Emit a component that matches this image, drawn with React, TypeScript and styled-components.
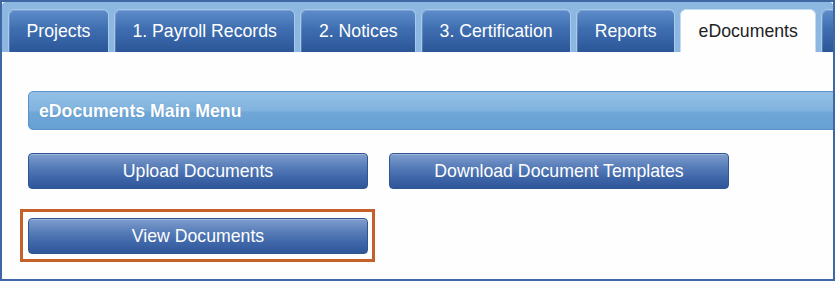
import styled, { createGlobalStyle } from 'styled-components'

const GlobalStyle = createGlobalStyle`
  html, body {
    margin: 0;
    padding: 0;
    background: #fff;
  }
  body {
    font-family: 'Liberation Sans', Arial, sans-serif;
  }
`

const Frame = styled.div`
  width: 835px;
  height: 281px;
  box-sizing: border-box;
  border: 2px solid #3f67a4;
  background: #fefefe;
  overflow: hidden;
  display: flex;
  flex-direction: column;
`

const TabStrip = styled.div`
  display: flex;
  flex-flow: row nowrap;
  align-items: flex-end;
  gap: 5px;
  height: 50px;
  padding: 7px 0 0 6px;
  box-sizing: border-box;
  background: #8bb7e0;
  border-radius: 4px 4px 0 0;
  white-space: nowrap;
`

const Tab = styled.div<{ $active?: boolean }>`
  flex: none;
  height: 43px;
  box-sizing: border-box;
  padding: 0 17.5px;
  display: flex;
  align-items: center;
  justify-content: center;
  font-size: 17.7px;
  border: 1px solid ${(p) => (p.$active ? '#c6dcf1' : '#a9cbeb')};
  border-bottom: none;
  border-radius: 6px 6px 0 0;
  color: ${(p) => (p.$active ? '#222' : '#fff')};
  background: ${(p) =>
    p.$active ? '#fefefe' : 'linear-gradient(to bottom, #5f8dcb 0%, #3f6eb0 45%, #2b5698 100%)'};
  box-shadow: ${(p) => (p.$active ? 'none' : 'inset 1px 1px 0 rgba(255, 255, 255, 0.18)')};
`

const Body = styled.div`
  flex: 1;
  padding: 39px 0 0 26px;
  display: flex;
  flex-direction: column;
`

const MenuHeader = styled.div`
  height: 39px;
  box-sizing: border-box;
  margin-right: -10px;
  padding: 1px 0 0 10px;
  display: flex;
  align-items: center;
  border: 1px solid #5a93cb;
  border-radius: 5px 0 0 5px;
  background: linear-gradient(to bottom, #94c0e6 0%, #80b3de 50%, #6ea6d6 56%, #66a0d3 100%);
  color: #fff;
  font-weight: bold;
  font-size: 17.7px;
  text-shadow: 0 0 1px rgba(40, 90, 150, 0.4);
`

const ButtonRow = styled.div`
  display: flex;
  flex-flow: row nowrap;
  gap: 21px;
  margin-top: 23px;
`

const MenuButton = styled.button`
  width: 340px;
  height: 36px;
  box-sizing: border-box;
  font-family: inherit;
  font-size: 17.7px;
  color: #fff;
  border: 1px solid #2f5592;
  border-radius: 4px;
  background: linear-gradient(to bottom, #7f9ecd 0%, #5a7fba 35%, #3e66a8 70%, #2e5699 100%);
  box-shadow: inset 0 1px 0 rgba(255, 255, 255, 0.25);
  cursor: pointer;
`

const Highlight = styled.div`
  align-self: flex-start;
  margin: 20px 0 0 -8px;
  padding: 6px 4px 5px 5px;
  border: 3px solid #c5602b;
`

const tabs = ['Projects', '1. Payroll Records', '2. Notices', '3. Certification', 'Reports', 'eDocuments', '']

export default function App() {
  return (
    <>
      <GlobalStyle />
      <Frame>
        <TabStrip>
          {tabs.map((t, i) => (
            <Tab key={i} $active={t === 'eDocuments'}>
              {t}
            </Tab>
          ))}
        </TabStrip>
        <Body>
          <MenuHeader>eDocuments Main Menu</MenuHeader>
          <ButtonRow>
            <MenuButton>Upload Documents</MenuButton>
            <MenuButton>Download Document Templates</MenuButton>
          </ButtonRow>
          <Highlight>
            <MenuButton>View Documents</MenuButton>
          </Highlight>
        </Body>
      </Frame>
    </>
  )
}
